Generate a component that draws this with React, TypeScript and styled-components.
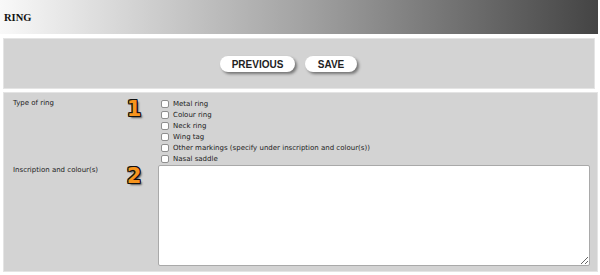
import React from "react"
import styled, { createGlobalStyle } from "styled-components"

const GlobalStyle = createGlobalStyle`
  html, body {
    margin: 0;
    padding: 0;
    background: #fff;
  }
`

const Page = styled.div`
  width: 600px;
  height: 275px;
  overflow: hidden;
  background: #fff;
`

const Header = styled.div`
  width: 598px;
  height: 34px;
  display: flex;
  align-items: center;
  padding-left: 4px;
  box-sizing: border-box;
  background: linear-gradient(to right, #f9f9f9 0%, #a4a4a4 50%, #444 100%);
`

const Title = styled.h1`
  margin: 0;
  font-family: "Liberation Serif", serif;
  font-weight: bold;
  font-size: 10.5px;
  color: #111;
  padding-top: 1px;
`

const Panel = styled.div<{ $width: number }>`
  margin-left: 3px;
  width: ${(props) => props.$width}px;
  box-sizing: border-box;
  background: #d3d3d3;
  border: 1px solid #e4e4e4;
`

const ButtonBar = styled(Panel)`
  margin-top: 4px;
  height: 51px;
  display: flex;
  align-items: center;
  justify-content: center;
  gap: 10px;
  padding-right: 21px;
  padding-top: 1px;
`

const Button = styled.button<{ $width: number }>`
  width: ${(props) => props.$width}px;
  height: 16px;
  border: none;
  border-radius: 9px;
  background: #fff;
  box-shadow: 2px 2px 3px rgba(0, 0, 0, 0.45);
  font-family: "Liberation Sans", Arial, sans-serif;
  font-weight: bold;
  font-size: 10px;
  color: #222;
  padding: 0;
  cursor: pointer;
`

const Form = styled(Panel)`
  margin-top: 3px;
  height: 180px;
  padding: 5px 0 5px 0;
  display: grid;
  grid-template-columns: 154px 1fr;
  row-gap: 1px;
  align-content: start;
`

const LabelCell = styled.div`
  display: flex;
  justify-content: space-between;
  align-items: flex-start;
  padding: 0 9px 0 9px;
`

const LabelText = styled.span`
  font-family: "DejaVu Sans", Verdana, sans-serif;
  font-size: 7px;
  color: #222;
  padding-top: 1px;
`

const Badge = styled.span`
  width: 30px;
  text-align: center;
  font-family: "DejaVu Sans", sans-serif;
  font-weight: bold;
  font-size: 21px;
  line-height: 22px;
  color: #f7941d;
  text-shadow: -1px -1px 0 #111, 1px -1px 0 #111, -1px 1px 0 #111,
    1px 1px 0 #111, 0 -1px 0 #111, 0 1px 0 #111, -1px 0 0 #111,
    1px 0 0 #111, 2px 2px 2px rgba(0, 0, 0, 0.6);
`

const CheckList = styled.div`
  display: flex;
  flex-direction: column;
`

const CheckRow = styled.label`
  display: flex;
  align-items: center;
  gap: 4px;
  height: 11px;
  font-family: "DejaVu Sans", Verdana, sans-serif;
  font-size: 7px;
  color: #222;
`

const Box = styled.input`
  appearance: none;
  margin: 0 0 0 3px;
  width: 8px;
  height: 8px;
  border: 1px solid #8f8f8f;
  border-radius: 2px;
  background: #fff;
`

const TextArea = styled.textarea`
  width: 432px;
  height: 101px;
  box-sizing: border-box;
  border: 1px solid #a9a9a9;
  border-radius: 2px;
  background: #fff;
  resize: both;
  margin: 0;
`

const ringTypes = [
  "Metal ring",
  "Colour ring",
  "Neck ring",
  "Wing tag",
  "Other markings (specify under inscription and colour(s))",
  "Nasal saddle",
]

export default function App() {
  return (
    <Page>
      <GlobalStyle />
      <Header>
        <Title>RING</Title>
      </Header>
      <ButtonBar $width={592}>
        <Button $width={75}>PREVIOUS</Button>
        <Button $width={52}>SAVE</Button>
      </ButtonBar>
      <Form $width={595}>
        <LabelCell>
          <LabelText>Type of ring</LabelText>
          <Badge>1</Badge>
        </LabelCell>
        <CheckList>
          {ringTypes.map((t) => (
            <CheckRow key={t}>
              <Box type="checkbox" />
              {t}
            </CheckRow>
          ))}
        </CheckList>
        <LabelCell>
          <LabelText>Inscription and colour(s)</LabelText>
          <Badge>2</Badge>
        </LabelCell>
        <TextArea />
      </Form>
    </Page>
  )
}
